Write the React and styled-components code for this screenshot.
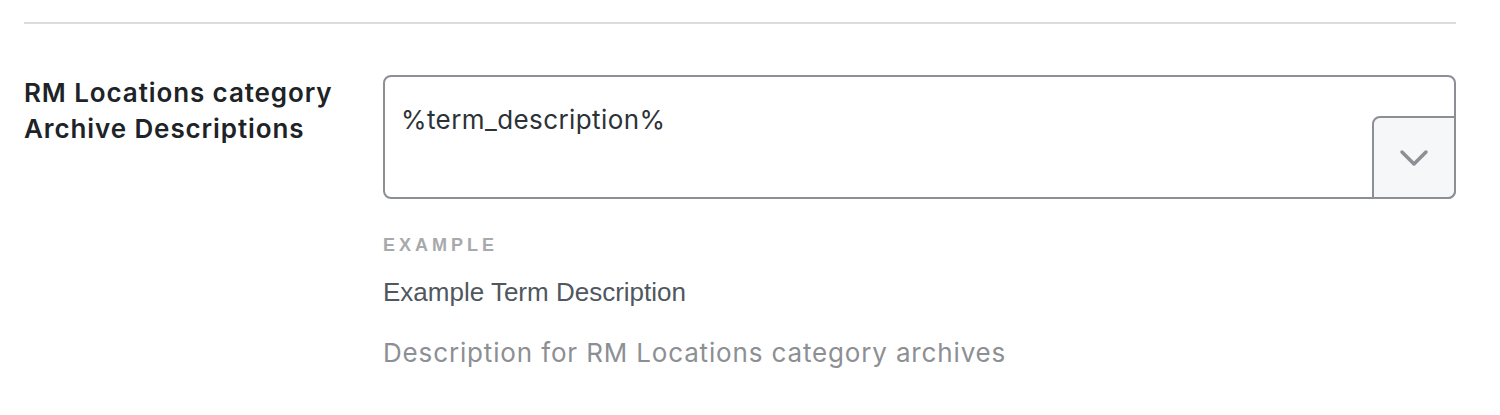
import React from 'react';
import styled, { createGlobalStyle } from 'styled-components';

const GlobalStyle = createGlobalStyle`
  html, body {
    margin: 0;
    padding: 0;
    background: #ffffff;
  }
`;

const Page = styled.div`
  width: 1500px;
  height: 415px;
  padding: 0 44px 0 24px;
  box-sizing: border-box;
  overflow: hidden;
`;

const Divider = styled.hr`
  margin: 22px 0 0;
  border: 0;
  border-top: 2px solid #dcdcde;
`;

const Row = styled.div`
  display: grid;
  grid-template-columns: 359px 1fr;
  margin-top: 51px;
`;

const Label = styled.label`
  font-family: Inter, "Noto Sans", sans-serif;
  font-weight: 600;
  font-size: 26px;
  line-height: 36px;
  letter-spacing: 0.9px;
  color: #1d2327;
`;

const Field = styled.div`
  display: flex;
  flex-direction: column;
`;

const EditorBox = styled.div`
  position: relative;
  height: 124px;
  border: 2px solid #8c8f94;
  border-radius: 8px;
  box-sizing: border-box;
  background: #fff;
`;

const Text = styled.div`
  font-family: Inter, "Noto Sans", sans-serif;
  font-size: 26px;
  line-height: 36px;
  letter-spacing: 0.4px;
  color: #2c3338;
  padding: 25px 16px 21px;
`;

const ToggleButton = styled.button`
  position: absolute;
  right: -2px;
  bottom: -2px;
  width: 84px;
  height: 83px;
  border: 2px solid #8c8f94;
  border-radius: 8px 0 8px 0;
  background: #f6f7f9;
  display: flex;
  align-items: center;
  justify-content: center;
  padding: 0;
  cursor: pointer;
`;

const ExampleHeading = styled.div`
  margin-top: 36px;
  font-family: "Liberation Sans", Arial, sans-serif;
  font-weight: 700;
  font-size: 18px;
  line-height: 20px;
  letter-spacing: 4px;
  color: #a7aaad;
`;

const ExampleValue = styled.div`
  margin-top: 22px;
  font-family: "Liberation Sans", Arial, sans-serif;
  font-size: 26px;
  line-height: 30px;
  color: #50575e;
`;

const Description = styled.p`
  margin: 28px 0 0;
  font-family: Inter, "Noto Sans", sans-serif;
  font-size: 26px;
  line-height: 36px;
  letter-spacing: 0.85px;
  color: #8c8f94;
`;

function Chevron() {
  return (
    <svg width="30" height="20" viewBox="0 0 30 20" fill="none">
      <path d="M3 4 L15 16 L27 4" stroke="#8c8f94" strokeWidth="3.5" strokeLinecap="round" strokeLinejoin="round" />
    </svg>
  );
}

function App() {
  return (
    <Page>
      <GlobalStyle />
      <Divider />
      <Row>
        <Label>
          RM Locations category
          <br />
          Archive Descriptions
        </Label>
        <Field>
          <EditorBox>
            <Text>%term_description%</Text>
            <ToggleButton aria-label="Insert variable">
              <Chevron />
            </ToggleButton>
          </EditorBox>
          <ExampleHeading>EXAMPLE</ExampleHeading>
          <ExampleValue>Example Term Description</ExampleValue>
          <Description>Description for RM Locations category archives</Description>
        </Field>
      </Row>
    </Page>
  );
}

export default App;
